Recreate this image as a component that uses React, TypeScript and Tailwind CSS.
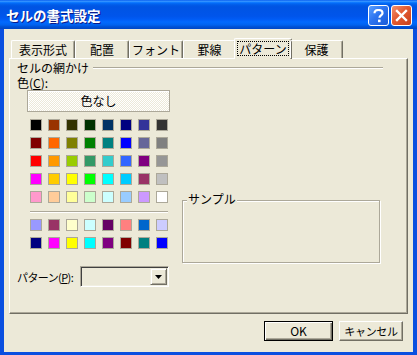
import React from "react";

const font = "font-['Noto_Sans_CJK_JP','Noto_Sans_CJK_SC',sans-serif]";

const mainColors = [
  ["#000000", "#993300", "#333300", "#003300", "#003366", "#000080", "#333399", "#333333"],
  ["#800000", "#ff6600", "#808000", "#008000", "#008080", "#0000ff", "#666699", "#808080"],
  ["#ff0000", "#ff9900", "#99cc00", "#339966", "#33cccc", "#3366ff", "#800080", "#969696"],
  ["#ff00ff", "#ffcc00", "#ffff00", "#00ff00", "#00ffff", "#00ccff", "#993366", "#c0c0c0"],
  ["#ff99cc", "#ffcc99", "#ffff99", "#ccffcc", "#ccffff", "#99ccff", "#cc99ff", "#ffffff"],
];

const chartColors = [
  ["#9999ff", "#993366", "#ffffcc", "#ccffff", "#660066", "#ff8080", "#0066cc", "#ccccff"],
  ["#000080", "#ff00ff", "#ffff00", "#00ffff", "#800080", "#800000", "#008080", "#0000ff"],
];

const tabs = [
  { label: "表示形式", width: "w-[64px]" },
  { label: "配置", width: "w-[54px]" },
  { label: "フォント", width: "w-[54px]" },
  { label: "罫線", width: "w-[53px]" },
  { label: "パターン", width: "w-[58px]", active: true },
  { label: "保護", width: "w-[53px]" },
];

function SwatchRows({ rows }: { rows: string[][] }) {
  return (
    <div className="flex flex-col gap-[6px]">
      {rows.map((row, i) => (
        <div key={i} className="flex gap-[6px]">
          {row.map((c, j) => (
            <div
              key={j}
              className="h-[12px] w-[12px] border border-[#aca899]"
              style={{ backgroundColor: c }}
            />
          ))}
        </div>
      ))}
    </div>
  );
}

function TitleButton({ kind }: { kind: "help" | "close" }) {
  const bg =
    kind === "help"
      ? "bg-[linear-gradient(135deg,#5aa0ff_0%,#2d74f0_45%,#1a5bd8_100%)]"
      : "bg-[linear-gradient(135deg,#f29270_0%,#e25a31_45%,#c8401c_100%)]";
  return (
    <div className={`flex h-[21px] w-[21px] items-center justify-center rounded-[3px] border border-white ${bg}`}>
      {kind === "help" ? (
        <svg width="11" height="14" viewBox="0 0 11 14">
          <path d="M1.5 4.2 C1.5 1.8 3.2 1 5.5 1 C7.8 1 9.5 2.2 9.5 4.2 C9.5 6.3 6.5 6.6 6.5 8.8" fill="none" stroke="white" strokeWidth="2.2" />
          <rect x="5" y="10.6" width="2.6" height="2.6" fill="white" />
        </svg>
      ) : (
        <svg width="13" height="13" viewBox="0 0 13 13">
          <path d="M2 2 L11 11 M11 2 L2 11" stroke="white" strokeWidth="2.4" strokeLinecap="square" />
        </svg>
      )}
    </div>
  );
}

export default function App() {
  return (
    <div className={`flex h-[355px] w-[417px] flex-col bg-[#0a4fe0] ${font} text-[12px] text-black`}>
      {/* title bar */}
      <div className="flex h-[29px] items-center justify-between bg-[linear-gradient(180deg,#0058ee_0%,#3a93ff_4%,#288eff_6%,#127dff_8%,#036ffc_10%,#0262ee_14%,#0057e5_20%,#0054e3_24%,#0055eb_56%,#005bf5_66%,#026afe_76%,#0062ef_86%,#0052d6_92%,#0046c4_100%)] pl-[6px] pr-[5px] pt-[2px]">
        <span className="text-[13.5px] font-bold leading-none text-white [text-shadow:1px_1px_0_#0a1a8a]">
          セルの書式設定
        </span>
        <div className="flex gap-[2px]">
          <TitleButton kind="help" />
          <TitleButton kind="close" />
        </div>
      </div>

      {/* client */}
      <div className="mx-[4px] mb-[3px] flex flex-1 flex-col bg-[#ece9d8] px-[5px] pt-[9px]">
        {/* tabs */}
        <div className="relative z-10 flex h-[20px] items-end pl-[2px]">
          {tabs.map((t) =>
            t.active ? (
              <div
                key={t.label}
                className={`${t.width} -mx-[2px] mb-[-1px] flex h-[21px] items-start justify-center rounded-t-[2px] border-l border-t border-r border-l-white border-t-white border-r-[#716f64] bg-[#ece9d8] pt-[2px] shadow-[inset_-1px_0_0_#aca899]`}
              >
                <span className="border border-dotted border-black px-[1px] leading-[13px]">{t.label}</span>
              </div>
            ) : (
              <div
                key={t.label}
                className={`${t.width} flex h-[18px] items-center justify-center rounded-t-[2px] border-l border-t border-r border-l-white border-t-white border-r-[#716f64] shadow-[inset_-1px_0_0_#aca899] leading-[14px]`}
              >
                {t.label}
              </div>
            )
          )}
        </div>

        {/* panel */}
        <div className="flex h-[256px] flex-col border border-b-[#716f64] border-l-white border-r-[#716f64] border-t-white pl-[7px] pr-[24px] shadow-[inset_-1px_-1px_0_#aca899]">
          <div className="mt-[2px] flex h-[14px] items-center gap-[4px]">
            <span className="leading-[14px]">セルの網かけ</span>
            <div className="h-[2px] flex-1 border-b border-t border-b-white border-t-[#aca899]" />
          </div>

          <div className="flex">
            <div className="flex w-[152px] flex-col">
              <div className="mt-[1px] h-[14px] leading-[13px]">
                色(<span className="underline underline-offset-1">C</span>):
              </div>
              <div className="ml-[10px] flex h-[22px] w-[143px] items-center justify-center border border-[#aca899] bg-[repeating-conic-gradient(#ffffff_0_25%,#ece9d8_0_50%)] bg-[length:2px_2px] shadow-[inset_1px_1px_0_#ffffff]">
                色なし
              </div>
              <div className="ml-[13px] mt-[7px] flex flex-col">
                <SwatchRows rows={mainColors} />
                <div className="mt-[8px] h-[2px] w-[138px] border-b border-t border-b-white border-t-[#aca899]" />
                <div className="mt-[6px]">
                  <SwatchRows rows={chartColors} />
                </div>
              </div>
              <div className="mt-[17px] flex items-center">
                <span className="w-[63px] whitespace-nowrap text-[11px] tracking-[-0.6px] leading-[14px]">
                  パターン(<span className="underline underline-offset-1">P</span>):
                </span>
                <div className="flex h-[21px] w-[89px] items-center justify-end border border-b-white border-l-[#aca899] border-r-white border-t-[#aca899] pr-[1px] shadow-[inset_1px_1px_0_#404040,inset_-1px_-1px_0_#f1efe2]">
                  <div className="flex h-[17px] w-[17px] items-center justify-center border border-b-[#716f64] border-l-[#f1efe2] border-r-[#716f64] border-t-[#f1efe2] bg-[#ece9d8] shadow-[inset_1px_1px_0_#ffffff,inset_-1px_-1px_0_#aca899]">
                    <svg width="7" height="4" viewBox="0 0 7 4">
                      <path d="M0 0 H7 L3.5 4 Z" fill="black" />
                    </svg>
                  </div>
                </div>
              </div>
            </div>

            {/* sample */}
            <div className="relative ml-[13px] mt-[125px] h-[63px] w-[198px] border border-[#aca899] shadow-[1px_1px_0_#ffffff,inset_1px_1px_0_#ffffff]">
              <span className="absolute left-[4px] top-[-9px] bg-[#ece9d8] px-[1px] leading-[14px]">サンプル</span>
            </div>
          </div>
        </div>

        {/* buttons */}
        <div className="mt-[7px] flex justify-end gap-[6px] pr-[5px]">
          <div className="flex h-[20px] w-[69px] items-center justify-center border border-black bg-[#ece9d8] shadow-[inset_1px_1px_0_#ffffff,inset_-1px_-1px_0_#716f64,inset_-2px_-2px_0_#aca899]">
            OK
          </div>
          <div className="flex h-[20px] w-[64px] items-center justify-center whitespace-nowrap border border-b-[#716f64] border-l-white border-r-[#716f64] border-t-white bg-[#ece9d8] text-[11px] tracking-[-0.3px] shadow-[inset_-1px_-1px_0_#aca899]">
            キャンセル
          </div>
        </div>
      </div>
    </div>
  );
}
